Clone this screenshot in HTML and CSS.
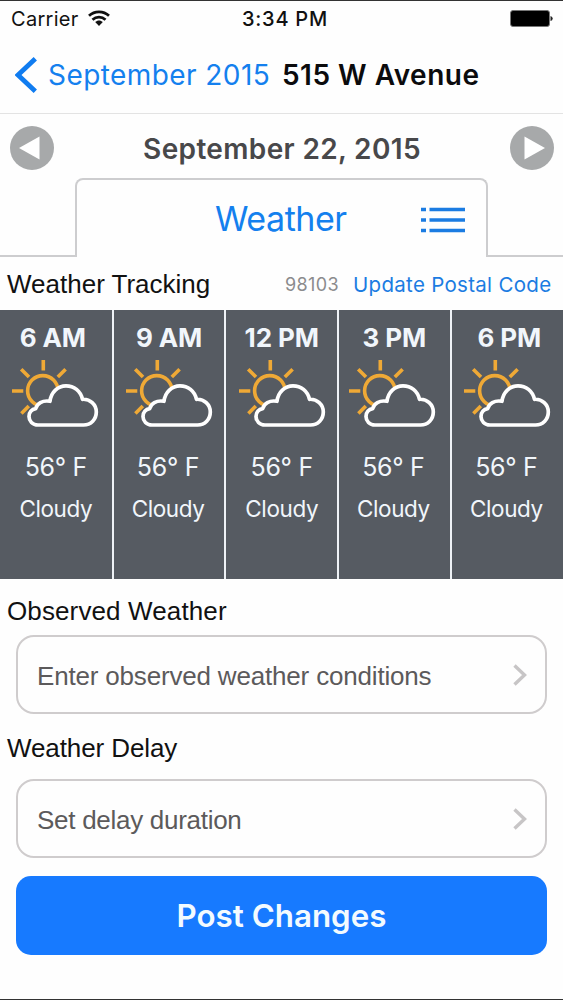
FILE: index.html
```html
<!DOCTYPE html>
<html lang="en">
<head>
<meta charset="utf-8">
<title>515 W Avenue</title>
<link rel="stylesheet" href="styles.css">
</head>
<body>
<svg class="defs" aria-hidden="true">
  <symbol id="partly" viewBox="0 0 87 67">
    <g fill="none" stroke="#efa936" stroke-width="3.600">
      <circle cx="30.800" cy="30.800" r="15.200"/>
      <path d="M31.300 0v10.500M9.200 9.200l7.800 7.800M53.600 9.200l-7.800 7.800M0 31h11.300M9.400 53.400l7.400-7.400"/>
    </g>
    <path fill="#565b62" stroke="#fff" stroke-width="3.700" stroke-linejoin="round" d="M26 65C20.500 65 17 61 17 56.500c0-4 2.700-7.200 6.700-7.800C24.700 43.500 30.500 40 38 41.300 39 32 46 25.800 54 25.800S68.500 31 70.500 39.300C78 38.700 84.300 44.700 84.300 52S79 65 71.500 65Z"/>
  </symbol>
</svg>
<div class="phone">
  <header class="status">
    <span class="carrier">Carrier</span>
    <svg class="wifi" viewBox="0 0 22 16"><g fill="none" stroke="#111" stroke-width="2.700"><path d="M1 5.700C6.500.5 15.500.5 21 5.700M4.500 9.800C8.200 6.200 13.800 6.200 17.500 9.800"/></g><path fill="#111" d="M7.200 12.100c2.200-2.200 5.400-2.200 7.600 0L11 16Z"/></svg>
    <span class="clock">3:34 PM</span>
    <svg class="battery" viewBox="0 0 43 18"><rect x=".5" y=".5" width="39" height="16" rx="2.500" fill="#000" stroke="#777"/><path d="M40.500 6q2.200.5 2.200 2.500t-2.200 2.500Z" fill="#222"/></svg>
  </header>
  <nav class="nav">
    <svg class="back" viewBox="0 0 22 36"><path d="M20.300 1.800 3 18l17.300 16.200" fill="none" stroke="#107cf0" stroke-width="4.800"/></svg>
    <span class="back-label">September 2015</span>
    <span class="title">515 W Avenue</span>
  </nav>
  <div class="date-row">
    <svg class="arrow" viewBox="0 0 44 44"><circle cx="22" cy="22" r="22" fill="#a7a9aa"/><path d="M9 22 29.500 10.500v23Z" fill="#fff"/></svg>
    <span class="date">September 22, 2015</span>
    <svg class="arrow" viewBox="0 0 44 44"><circle cx="22" cy="22" r="22" fill="#a7a9aa"/><path d="M35 22 14.500 10.500v23Z" fill="#fff"/></svg>
  </div>
  <div class="tabs">
    <div class="tab-side"></div>
    <div class="tab">
      <span class="tab-label">Weather</span>
      <svg class="list" viewBox="0 0 44 26"><path d="M0 2.500h5M8.500 2.500H44M0 13h5M8.500 13H44M0 23.500h5M8.500 23.500H44" stroke="#1b7ce2" stroke-width="3.600"/></svg>
    </div>
    <div class="tab-side"></div>
  </div>
  <div class="tracking">
    <span class="heading tracking-title">Weather Tracking</span>
    <span class="zip">98103</span>
    <span class="update">Update Postal Code</span>
  </div>
  <section class="forecast">
    <div class="cell c1"><b class="time">6 AM</b><svg class="icon"><use href="#partly"/></svg><span class="temp">56° F</span><span class="sky">Cloudy</span></div>
    <div class="cell c2"><b class="time">9 AM</b><svg class="icon"><use href="#partly"/></svg><span class="temp">56° F</span><span class="sky">Cloudy</span></div>
    <div class="cell c3"><b class="time">12 PM</b><svg class="icon"><use href="#partly"/></svg><span class="temp">56° F</span><span class="sky">Cloudy</span></div>
    <div class="cell c4"><b class="time">3 PM</b><svg class="icon"><use href="#partly"/></svg><span class="temp">56° F</span><span class="sky">Cloudy</span></div>
    <div class="cell c5"><b class="time">6 PM</b><svg class="icon"><use href="#partly"/></svg><span class="temp">56° F</span><span class="sky">Cloudy</span></div>
  </section>
  <div class="label label-observed"><span class="heading observed">Observed Weather</span></div>
  <div class="field"><span class="hint hint-observed">Enter observed weather conditions</span><svg class="chev" viewBox="0 0 14 22"><path d="M1.500 1.500 11.500 11l-10 9.500" fill="none" stroke="#c7c5c6" stroke-width="3.400"/></svg></div>
  <div class="label label-delay"><span class="heading delay">Weather Delay</span></div>
  <div class="field"><span class="hint hint-delay">Set delay duration</span><svg class="chev" viewBox="0 0 14 22"><path d="M1.500 1.500 11.500 11l-10 9.500" fill="none" stroke="#c7c5c6" stroke-width="3.400"/></svg></div>
  <button class="post">Post Changes</button>
</div>
</body>
</html>
```
FILE: styles.css
```css
* { box-sizing: border-box; }
body { margin: 0; background: #fefefe; font-family: Inter, "Liberation Sans", sans-serif; }
.defs { display: block; width: 0; height: 0; }
.phone { display: flex; flex-direction: column; width: 563px; height: 1000px; border-top: 1px solid #333; border-bottom: 1px solid #333; background: #fefefe; overflow: hidden; white-space: nowrap; }

.status { display: grid; grid-template-columns: 77px 154px 268px 43px; align-items: center; height: 36px; padding-left: 11px; font-size: 20px; color: #111; }
.carrier { letter-spacing: 0.3px; }
.wifi { width: 22px; height: 16px; margin-bottom: 3px; }
.clock { font-weight: 500; letter-spacing: 0.75px; }
.battery { width: 43px; height: 18px; }

.nav { display: flex; align-items: center; height: 77px; padding: 0 0 0 15px; border-bottom: 1px solid #e3e3e3; font-size: 28px; }
.back { width: 22px; height: 36px; margin: 0 11px 1px 0; }
.back-label { width: 234px; color: #1480ee; letter-spacing: 0.43px; }
.title { font-weight: 600; color: #0b0b0d; font-size: 28px; letter-spacing: 0.5px; }

.date-row { display: flex; align-items: center; justify-content: space-between; height: 64px; padding: 3px 9px 0 10px; }
.arrow { width: 44px; height: 44px; }
.date { padding-top: 2px; font-size: 28px; font-weight: 600; letter-spacing: 0.35px; color: #48484a; }

.tabs { display: grid; grid-template-columns: 75px 413px 75px; height: 79px; }
.tab-side { border-bottom: 2px solid #cdcdcf; }
.tab { display: flex; align-items: center; padding: 2px 0 0 138px; border: 2px solid #cdcdcf; border-bottom: 0; border-radius: 8px 8px 0 0; }
.tab-label { width: 206px; padding-bottom: 3px; font-size: 34px; letter-spacing: -0.45px; color: #1480ee; }
.list { width: 44px; height: 26px; }

.tracking { display: flex; align-items: center; height: 53px; padding: 1px 0 0 7px; }
.heading { font-family: "Liberation Sans", Arial, sans-serif; font-size: 26px; color: #111; }
.tracking-title { width: 278px; }
.zip { width: 68px; font-size: 18px; letter-spacing: 0.4px; color: #8b8b8d; }
.update { font-size: 20.5px; letter-spacing: 0.3px; color: #1b7ce2; }

.forecast { display: grid; grid-template-columns: 111.7px 110.7px 110.7px 110.7px 1fr; column-gap: 2px; height: 269px; background: #eef2f6; }
.cell { display: flex; flex-direction: column; align-items: center; background: #565b62; color: #f1f6fb; }
.time { height: 28px; margin-top: 14px; line-height: 28px; font-size: 26px; font-weight: 700; letter-spacing: -0.1px; }
.icon { width: 87px; height: 67px; margin-top: 8px; }
.temp { height: 30px; margin-top: 25px; line-height: 30px; font-size: 25px; letter-spacing: -0.3px; }
.sky { height: 28px; margin-top: 13px; line-height: 28px; font-size: 22.5px; letter-spacing: -0.4px; }
.c1 .time { margin-right: 6px; }
.c2 .temp, .c2 .sky { margin-right: 2px; }
.c3 .icon { margin-left: 1px; }
.c4 .icon { margin-right: 4px; }
.c4 .temp, .c4 .sky { margin-right: 2px; }
.c5 .time { margin-left: 4px; }
.c5 .temp, .c5 .sky { margin-right: 2px; }

.label { display: flex; align-items: center; padding-left: 7px; }
.label-observed { height: 56px; padding-top: 8px; }
.label-delay { height: 65px; padding-top: 4px; }
.observed { letter-spacing: 0.12px; }
.delay { letter-spacing: -0.1px; }
.field { display: flex; flex-shrink: 0; align-items: center; justify-content: space-between; height: 79px; margin: 0 16px; padding: 0 18px 0 19px; border: 2px solid #cfcccd; border-radius: 18px; }
.hint { padding-top: 4px; font-family: "Liberation Sans", Arial, sans-serif; font-size: 26px; color: #5c5a5b; }
.hint-observed { letter-spacing: -0.18px; }
.hint-delay { letter-spacing: -0.28px; }
.chev { width: 14px; height: 22px; }
.post { height: 79px; margin: 18px 16px 0; padding: 0; border: 0; border-radius: 15px; background: #177aff; color: #f3fbff; font: 600 31.3px Inter, sans-serif; }
```
